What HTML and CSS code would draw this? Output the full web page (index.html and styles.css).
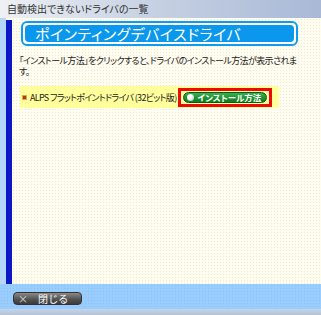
FILE: index.html
```html
<!DOCTYPE html>
<html lang="ja">
<head>
<meta charset="utf-8">
<link rel="stylesheet" href="styles.css">
</head>
<body>
<div class="window">
  <div class="titlebar">自動検出できないドライバの一覧</div>
  <div class="frame">
    <div class="panel">
      <div class="sidebar"></div>
      <div class="content">
        <div class="banner"><span>ポインティングデバイスドライバ</span></div>
        <p class="lead">「インストール方法」をクリックすると、ドライバのインストール方法が表示されま<br>す。</p>
        <div class="row">
          <span class="bullet"></span>
          <span class="name">ALPS フラットポイントドライバ (32ビット版)</span>
          <span class="highlight"><span class="install"><span class="dot"></span>インストール方法</span></span>
        </div>
      </div>
    </div>
  </div>
  <div class="footer">
    <span class="close"><span class="x">×</span>閉じる</span>
  </div>
  <div class="strip"></div>
</div>
</body>
</html>
```

FILE: styles.css
```css
* { box-sizing: border-box; }
html, body { margin: 0; padding: 0; }
body {
  width: 321px;
  height: 315px;
  overflow: hidden;
  font-family: "Noto Sans CJK JP", "Noto Sans", sans-serif;
  font-feature-settings: "palt";
}
.window {
  display: flex;
  flex-direction: column;
  width: 321px;
  height: 315px;
  background: #a9d1ff;
}
.titlebar {
  height: 18px;
  padding: 3px 0 0 7px;
  font-size: 10px;
  line-height: 12px;
  color: #333;
  background: linear-gradient(90deg, #eef0f4 0%, #c8d2e4 45%, #a9b9d6 100%);
}
.frame {
  flex: 1;
  padding: 0 0 0 6px;
  background: #b4d6fb;
  display: flex;
}
.panel {
  flex: 1;
  display: flex;
  background-color: #fffcf0;
  background-image: radial-gradient(circle, #efe8d2 0.6px, transparent 0.8px);
  background-size: 3px 3px;
}
.sidebar {
  width: 6px;
  margin-top: 2px;
  background: #0c17c8;
}
.content {
  flex: 1;
  padding: 3px 0 0 7px;
}
.banner {
  margin-left: 2px;
  width: 277px;
  height: 25px;
  border: 2px solid #0f9cf0;
  border-radius: 6px;
  background: #fff;
  padding: 2px;
}
.banner span {
  display: block;
  height: 17px;
  border-radius: 4px;
  background: #0a97ec;
  color: #fff;
  font-size: 15px;
  line-height: 17px;
  padding-left: 10px;
  letter-spacing: 0.5px;
}
.lead {
  margin: 9px 0 0 0;
  width: 290px;
  font-size: 9px;
  line-height: 11px;
  letter-spacing: -0.6px;
  color: #222;
  white-space: nowrap;
}
.row {
  margin: 9px 0 0 1px;
  width: 259px;
  height: 22px;
  background: #ffff9c;
  display: flex;
  align-items: center;
  padding-left: 2px;
  white-space: nowrap;
}
.bullet {
  width: 5px;
  height: 5px;
  background: #b03a10;
  border: 1px solid #e4a060;
  margin-right: 3px;
  flex: none;
}
.name {
  font-size: 9px;
  color: #222;
  letter-spacing: -0.7px;
}
.highlight {
  margin-left: 1px;
  border: 3px solid #ee0a0a;
  padding: 1px 2px;
  display: flex;
  flex: none;
}
.install {
  width: 84px;
  height: 11px;
  border-radius: 6px;
  background: linear-gradient(#37b04a, #0f7a22);
  border: 1px solid #0a5a18;
  color: #fff;
  font-size: 8.5px;
  line-height: 9px;
  display: flex;
  align-items: center;
  padding-left: 3px;
  font-weight: bold;
}
.dot {
  width: 7px;
  height: 7px;
  border-radius: 50%;
  background: radial-gradient(circle at 35% 35%, #fff 30%, #bbb 90%);
  margin-right: 4px;
}
.footer {
  height: 25px;
  padding: 8px 0 0 13px;
  background-color: #99ccff;
  background-image: radial-gradient(circle, #8ebff5 0.6px, transparent 0.8px);
  background-size: 3px 3px;
}
.close {
  display: flex;
  align-items: center;
  width: 69px;
  height: 13px;
  border-radius: 4px;
  background: linear-gradient(#8a8a8a, #505050 60%, #3c3c3c);
  border: 1px solid #333;
  color: #fff;
  font-size: 10px;
  line-height: 11px;
  padding-left: 4px;
  letter-spacing: 1px;
}
.close .x { margin-right: 9px; color: #ddd; }
.strip {
  height: 6px;
  background: linear-gradient(#c6d4e6, #b3c2d8);
}
```
